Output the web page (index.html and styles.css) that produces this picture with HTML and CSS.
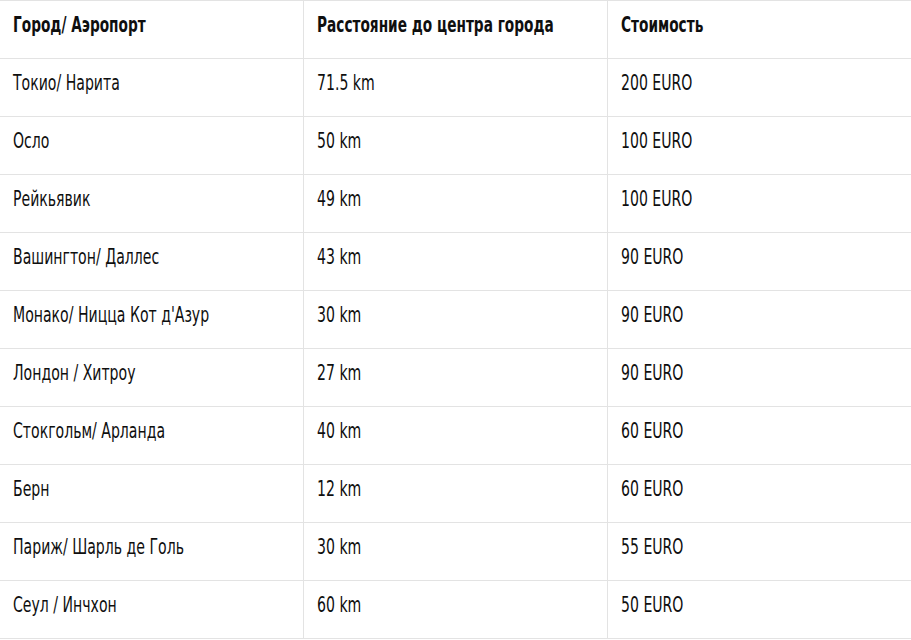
FILE: index.html
```html
<!DOCTYPE html>
<html lang="ru">
<head>
<meta charset="utf-8">
<link rel="stylesheet" href="styles.css">
</head>
<body>
<table class="prices">
  <thead>
    <tr><th><span class="t">Город/ Аэропорт</span></th><th><span class="t">Расстояние до центра города</span></th><th><span class="t">Стоимость</span></th></tr>
  </thead>
  <tbody>
    <tr><td><span class="t">Токио/ Нарита</span></td><td><span class="t">71.5 km</span></td><td><span class="t">200 EURO</span></td></tr>
    <tr><td><span class="t">Осло</span></td><td><span class="t">50 km</span></td><td><span class="t">100 EURO</span></td></tr>
    <tr><td><span class="t">Рейкьявик</span></td><td><span class="t">49 km</span></td><td><span class="t">100 EURO</span></td></tr>
    <tr><td><span class="t">Вашингтон/ Даллес</span></td><td><span class="t">43 km</span></td><td><span class="t">90 EURO</span></td></tr>
    <tr><td><span class="t">Монако/ Ницца Кот д'Азур</span></td><td><span class="t">30 km</span></td><td><span class="t">90 EURO</span></td></tr>
    <tr><td><span class="t">Лондон / Хитроу</span></td><td><span class="t">27 km</span></td><td><span class="t">90 EURO</span></td></tr>
    <tr><td><span class="t">Стокгольм/ Арланда</span></td><td><span class="t">40 km</span></td><td><span class="t">60 EURO</span></td></tr>
    <tr><td><span class="t">Берн</span></td><td><span class="t">12 km</span></td><td><span class="t">60 EURO</span></td></tr>
    <tr><td><span class="t">Париж/ Шарль де Голь</span></td><td><span class="t">30 km</span></td><td><span class="t">55 EURO</span></td></tr>
    <tr><td><span class="t">Сеул / Инчхон</span></td><td><span class="t">60 km</span></td><td><span class="t">50 EURO</span></td></tr>
  </tbody>
</table>
</body>
</html>
```
FILE: styles.css
```css
html, body {
  margin: 0;
  padding: 0;
  background: #fff;
}
body {
  overflow: hidden;
  width: 911px;
}
.prices {
  border-collapse: collapse;
  table-layout: fixed;
  width: 913px;
  margin-left: -1px;
  font-family: "DejaVu Sans Condensed", "Liberation Sans", sans-serif;
  font-size: 21px;
  line-height: 24px;
  color: #0f0f0f;
}
.prices th, .prices td {
  border: 1px solid #e3e3e3;
  height: 58px;
  padding: 0 12px 9px 13px;
  text-align: left;
  vertical-align: middle;
  box-sizing: border-box;
  white-space: nowrap;
}
.prices th {
  font-weight: 700;
}
.prices td {
  font-weight: 400;
}
.t {
  display: inline-block;
  transform-origin: left center;
  transform: scaleX(0.745);
}
.prices th .t {
  transform: scaleX(0.725);
}
.prices th:nth-child(1), .prices td:nth-child(1) { width: 304px; }
.prices th:nth-child(2), .prices td:nth-child(2) { width: 304px; }
```
